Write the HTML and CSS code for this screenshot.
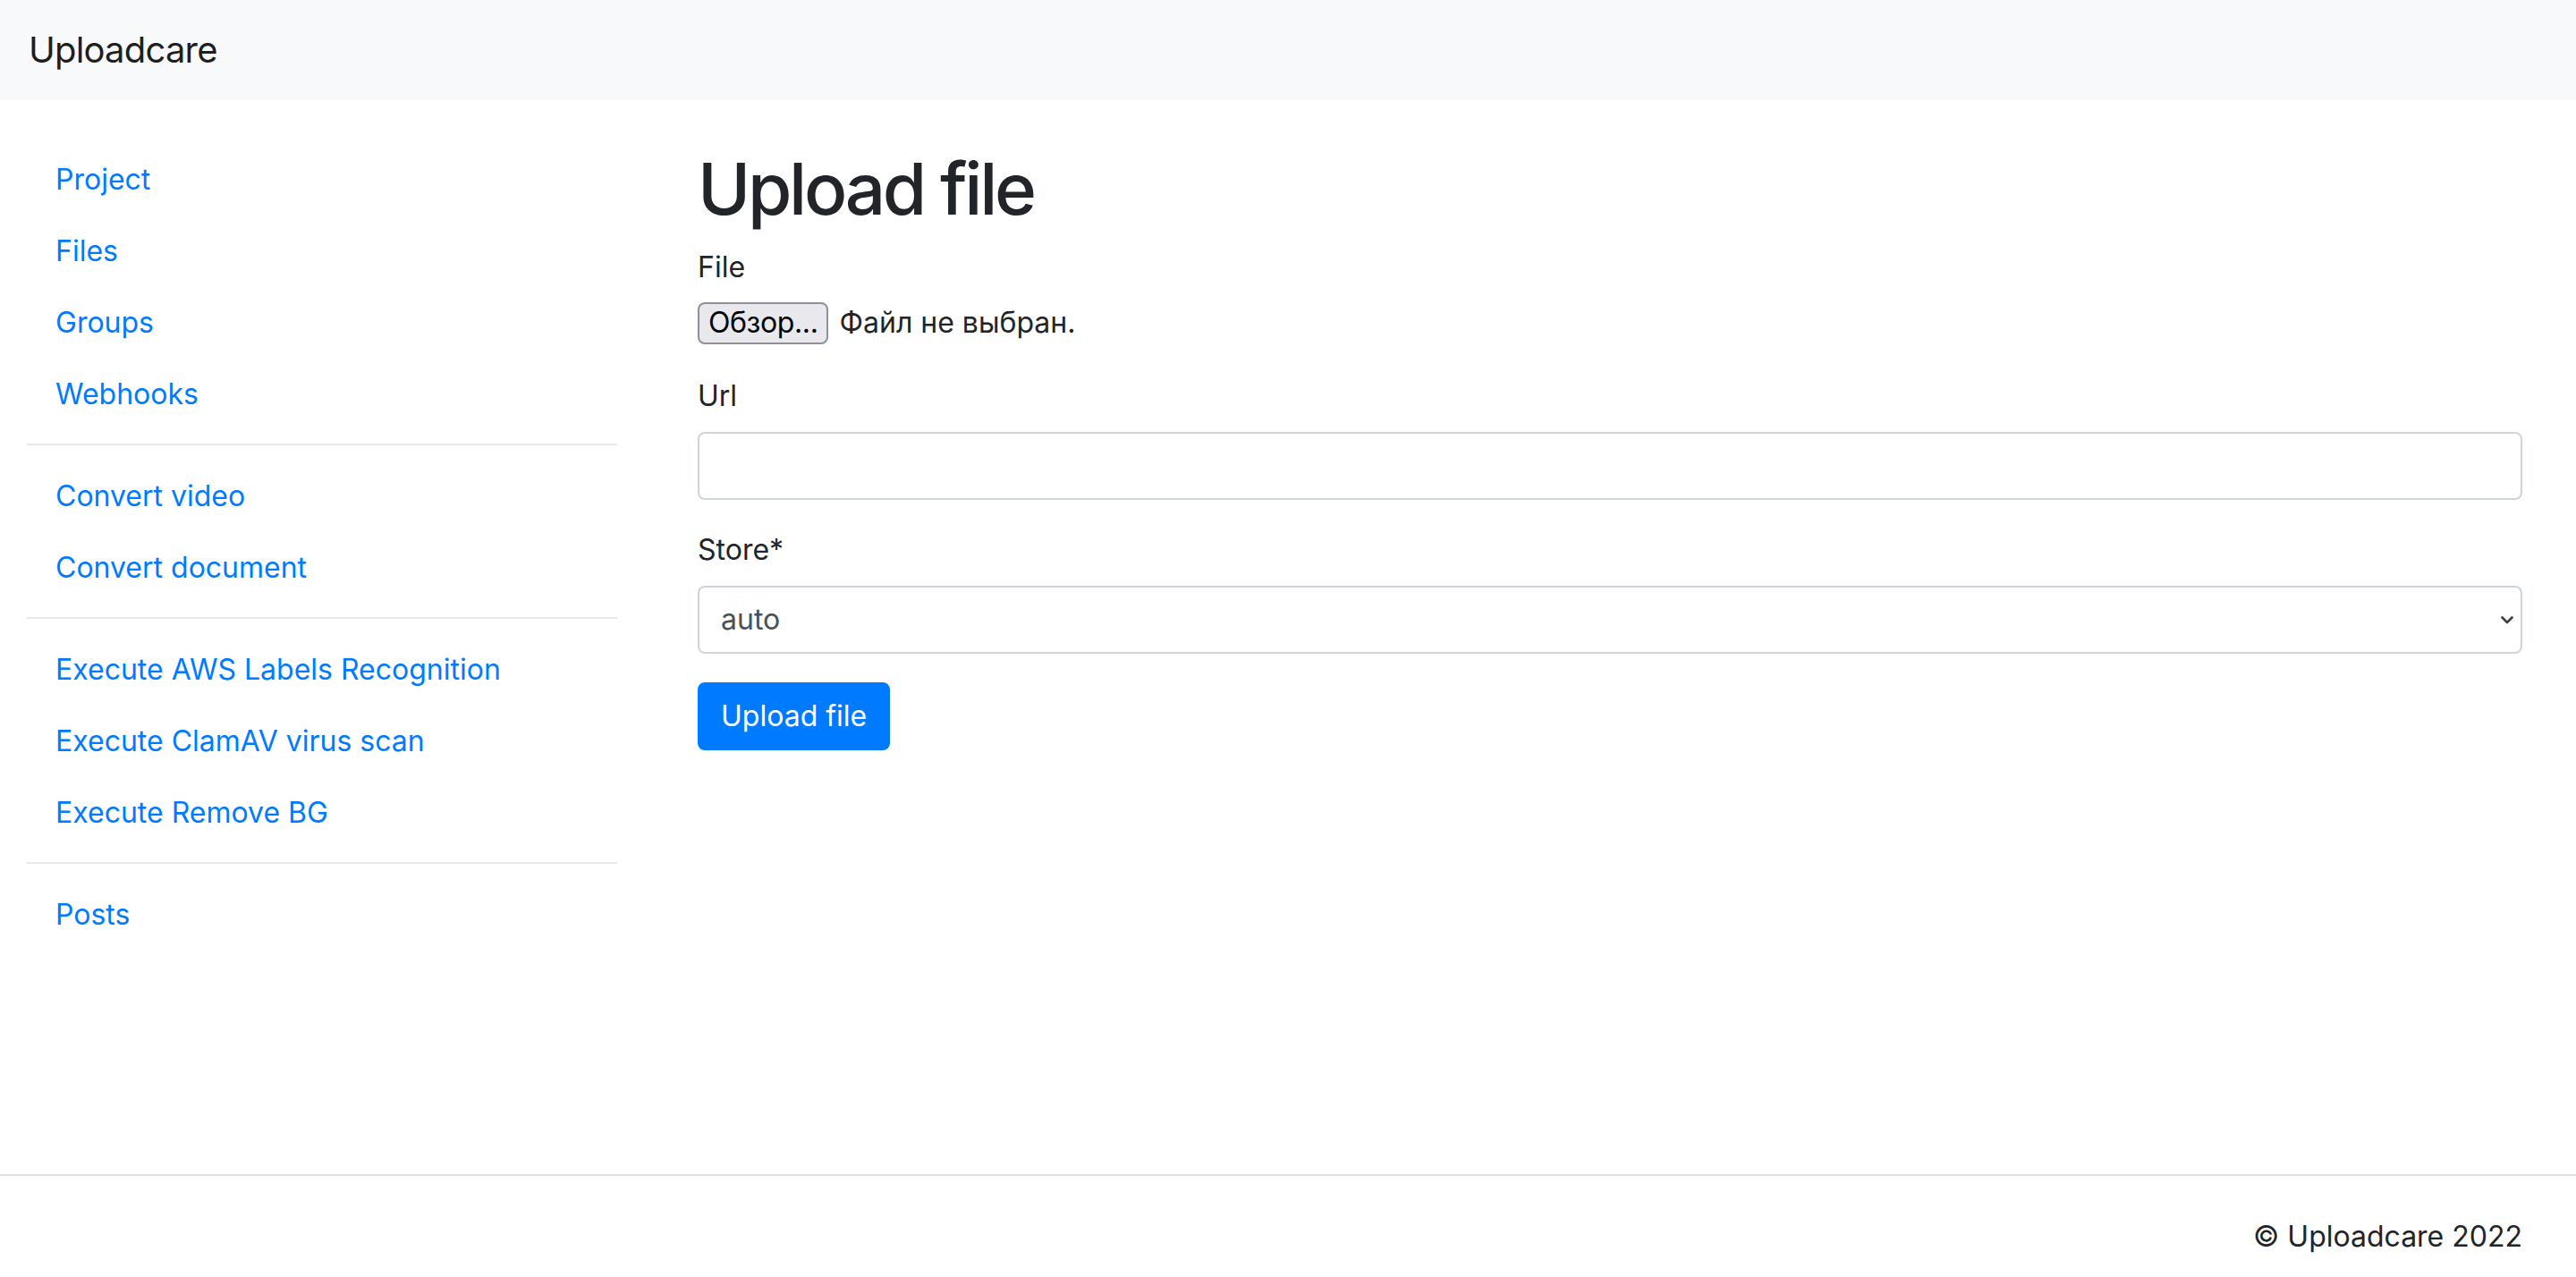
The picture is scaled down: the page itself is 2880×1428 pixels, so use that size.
FILE: index.html
```html
<!DOCTYPE html>
<html lang="en">
<head>
<meta charset="utf-8">
<title>Upload file</title>
<link rel="stylesheet" href="styles.css">
</head>
<body>
<nav class="navbar">
  <a class="brand" href="#">Uploadcare</a>
</nav>
<div class="layout">
  <aside class="sidebar">
    <ul class="nav-list">
      <li><a class="nav-link" href="#">Project</a></li>
      <li><a class="nav-link" href="#">Files</a></li>
      <li><a class="nav-link" href="#">Groups</a></li>
      <li><a class="nav-link" href="#">Webhooks</a></li>
    </ul>
    <hr class="sep">
    <ul class="nav-list">
      <li><a class="nav-link" href="#">Convert video</a></li>
      <li><a class="nav-link" href="#">Convert document</a></li>
    </ul>
    <hr class="sep">
    <ul class="nav-list">
      <li><a class="nav-link" href="#">Execute AWS Labels Recognition</a></li>
      <li><a class="nav-link" href="#">Execute ClamAV virus scan</a></li>
      <li><a class="nav-link" href="#">Execute Remove BG</a></li>
    </ul>
    <hr class="sep">
    <ul class="nav-list">
      <li><a class="nav-link" href="#">Posts</a></li>
    </ul>
  </aside>
  <main class="main">
    <h1 class="title">Upload file</h1>
    <form class="form">
      <div class="form-group">
        <label class="label">File</label>
        <div class="file-input">
          <span class="file-btn">Обзор...</span>
          <span class="file-text">Файл не выбран.</span>
        </div>
      </div>
      <div class="form-group">
        <label class="label">Url</label>
        <div class="control"></div>
      </div>
      <div class="form-group">
        <label class="label">Store*</label>
        <div class="control select">
          <span class="select-value">auto</span>
          <svg class="chevron" viewBox="0 0 14 9" width="14" height="9"><path d="M1.5 1.5 L7 7 L12.5 1.5" fill="none" stroke="#3a3f45" stroke-width="2.6" stroke-linecap="round" stroke-linejoin="round"/></svg>
        </div>
      </div>
      <button class="btn" type="button">Upload file</button>
    </form>
  </main>
</div>
<footer class="footer">
  <span class="copy">© Uploadcare 2022</span>
</footer>
</body>
</html>
```

FILE: styles.css
```css
* { box-sizing: border-box; }

html, body {
  margin: 0;
  padding: 0;
}

body {
  font-family: Inter, "Noto Sans", "Liberation Sans", sans-serif;
  font-size: 32px;
  line-height: 48px;
  color: #212529;
  background: #ffffff;
  min-height: 1428px;
  display: flex;
  flex-direction: column;
}

.navbar {
  height: 112px;
  background: #f8f9fa;
  display: flex;
  align-items: center;
  padding: 0 32px;
  flex-shrink: 0;
}

.brand {
  font-size: 40px;
  line-height: 60px;
  color: rgba(0, 0, 0, 0.9);
  text-decoration: none;
  letter-spacing: -0.8px;
}

.layout {
  display: flex;
  padding-top: 48px;
  flex: 1;
}

.sidebar {
  width: 720px;
  flex-shrink: 0;
  padding: 0 30px;
}

.nav-list {
  list-style: none;
  margin: 0;
  padding: 0;
}

.nav-link {
  display: block;
  padding: 17px 32px 15px;
  color: #007bff;
  text-decoration: none;
  line-height: 48px;
}

.sep {
  margin: 16px 0;
  border: 0;
  border-top: 2px solid #e6e8eb;
  height: 0;
}

.main {
  flex: 1;
  padding: 3px 60px 0;
}

.title {
  font-size: 80px;
  line-height: 96px;
  font-weight: 500;
  margin: 0 0 16px;
  letter-spacing: -3.3px;
}

.form-group {
  margin-bottom: 32px;
}

.label {
  display: inline-block;
  margin-bottom: 16px;
}

.file-input {
  display: flex;
  align-items: center;
  height: 48px;
  padding-bottom: 4px;
}

.file-btn {
  display: inline-flex;
  align-items: center;
  height: 47px;
  padding: 0 10px;
  background: #e9e9ed;
  border: 2px solid #8f8f9d;
  border-radius: 8px;
  color: #000;
  font-size: 32px;
  letter-spacing: -0.4px;
}

.file-text {
  margin-left: 12px;
  font-size: 32px;
}

.control {
  height: 76px;
  width: 100%;
  border: 2px solid #ced4da;
  border-radius: 8px;
  background: #fff;
}

.select {
  display: flex;
  align-items: center;
  justify-content: space-between;
  padding: 0 8px 0 24px;
}

.select-value {
  color: #495057;
}

.chevron {
  display: block;
}

.btn {
  font-family: inherit;
  font-size: 32px;
  line-height: 48px;
  height: 76px;
  padding: 0 24px;
  background: #007bff;
  color: #fff;
  border: 2px solid #007bff;
  border-radius: 8px;
  cursor: pointer;
}

.footer {
  border-top: 2px solid #dee2e6;
  height: 115px;
  display: flex;
  align-items: center;
  justify-content: flex-end;
  padding: 0 60px;
  flex-shrink: 0;
}

.copy {
  line-height: 48px;
  padding-top: 22px;
}
```
